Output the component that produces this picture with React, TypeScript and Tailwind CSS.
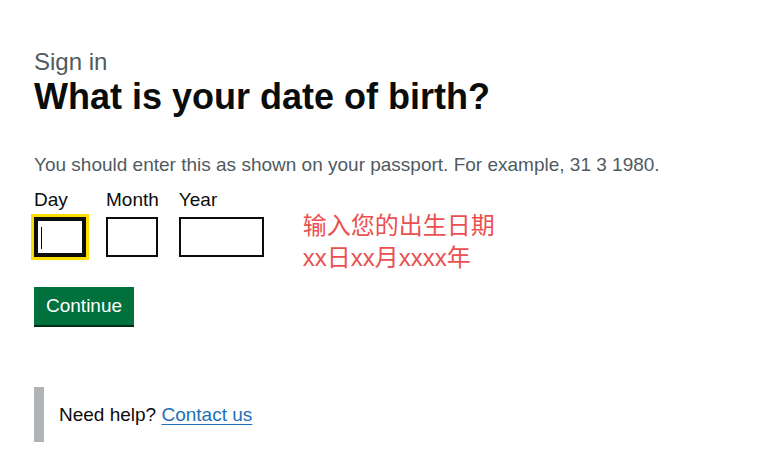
const ink = 'text-[#0b0c0c]';

function DateField({
  label,
  width,
  focused,
}: {
  label: string;
  width: string;
  focused?: boolean;
}) {
  return (
    <div className="flex flex-col">
      <label className={`block text-[19px] leading-[25px] ${ink}`}>{label}</label>
      <div className="relative mt-[5px]">
        <input
          type="text"
          inputMode="numeric"
          className={
            'block h-10 border-2 border-[#0b0c0c] bg-white px-[5px] text-[19px] outline-none ' +
            width +
            (focused ? ' shadow-[inset_0_0_0_2px_#0b0c0c,0_0_0_3px_#ffdd00]' : '')
          }
        />
        {focused && (
          <span className="pointer-events-none absolute left-[7px] top-[10px] h-[22px] w-px bg-[#0b0c0c]" />
        )}
      </div>
    </div>
  );
}

export default function App() {
  return (
    <div
      className="min-h-[470px] w-full bg-white px-[34px] pt-[47px]"
      style={{ fontFamily: '"Liberation Sans", Arial, "Noto Sans CJK SC", sans-serif' }}
    >
      <span className="block text-[24px] leading-[30px] text-[#505a5f]">Sign in</span>
      <h1 className={`text-[36px] font-bold leading-[40px] ${ink}`}>What is your date of birth?</h1>

      <p className="mt-[35px] text-[19px] leading-[25px] text-[#505a5f]">
        You should enter this as shown on your passport. For example, 31 3 1980.
      </p>

      <div className="mt-[10px] flex items-start">
        <div className="flex gap-5">
          <DateField label="Day" width="w-[52px]" focused />
          <DateField label="Month" width="w-[52px]" />
          <DateField label="Year" width="w-[85px]" />
        </div>
        {/* hint overflows below the inputs without pushing the button */}
        <div className="-mb-[17px] ml-[39px] mt-[23px] text-[24px] leading-[32px] text-[#eb5050]">
          <div>输入您的出生日期</div>
          <div>xx日xx月xxxx年</div>
        </div>
      </div>

      <button
        type="button"
        className="mt-[30px] block border-2 border-transparent bg-[#00703c] px-[10px] pb-[8px] pt-[7px] text-[19px] leading-[19px] text-white shadow-[0_2px_0_#002d18]"
      >
        Continue
      </button>

      <div className="mt-[62px] border-l-[10px] border-[#b1b4b6] py-[15px] pl-[15px]">
        <p className={`text-[19px] leading-[25px] ${ink}`}>
          Need help?{' '}
          <a href="#" className="text-[#1d70b8] underline underline-offset-[3px]">
            Contact us
          </a>
        </p>
      </div>
    </div>
  );
}
